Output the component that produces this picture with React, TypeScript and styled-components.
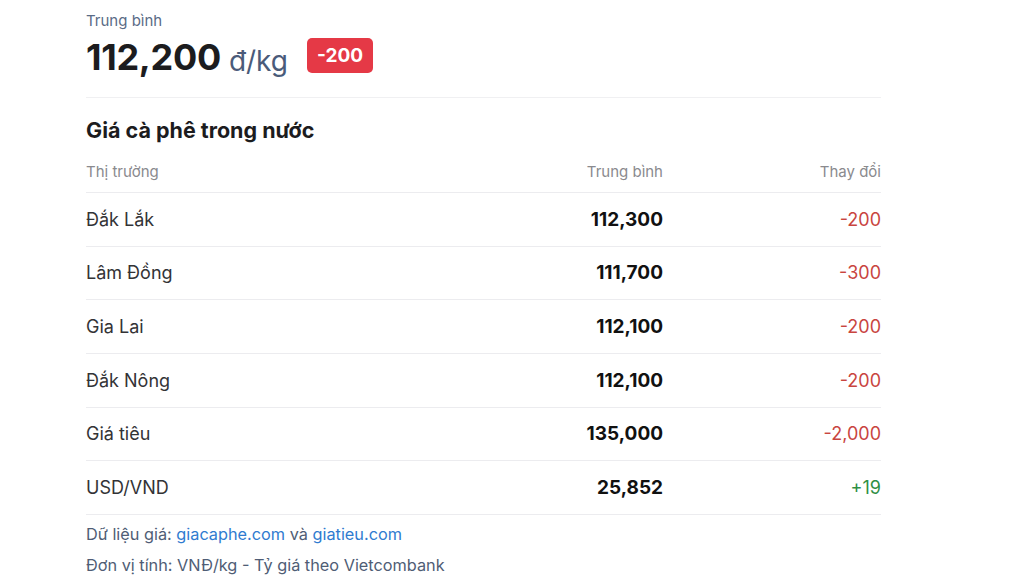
import styled, { createGlobalStyle } from "styled-components";

const GlobalStyle = createGlobalStyle`
  body {
    margin: 0;
    background: #fff;
    font-family: Inter, "Noto Sans", sans-serif;
    color: #1a1a1a;
  }
`;

interface Row {
  market: string;
  price: string;
  change: string;
}

const rows: Row[] = [
  { market: "Đắk Lắk", price: "112,300", change: "-200" },
  { market: "Lâm Đồng", price: "111,700", change: "-300" },
  { market: "Gia Lai", price: "112,100", change: "-200" },
  { market: "Đắk Nông", price: "112,100", change: "-200" },
  { market: "Giá tiêu", price: "135,000", change: "-2,000" },
  { market: "USD/VND", price: "25,852", change: "+19" },
];

export default function App() {
  return (
    <>
      <GlobalStyle />
      <Page>
        <Summary>
          <SummaryLabel>Trung bình</SummaryLabel>
          <PriceLine>
            <BigPrice>112,200</BigPrice>
            <Unit>đ/kg</Unit>
            <Badge>-200</Badge>
          </PriceLine>
        </Summary>
        <Heading>Giá cà phê trong nước</Heading>
        <Table>
          <HeadCell>Thị trường</HeadCell>
          <HeadCell $right>Trung bình</HeadCell>
          <HeadCell $right>Thay đổi</HeadCell>
          {rows.map((r) => (
            <RowGroup key={r.market}>
              <MarketCell>{r.market}</MarketCell>
              <PriceCell>{r.price}</PriceCell>
              <ChangeCell $up={r.change.startsWith("+")}>{r.change}</ChangeCell>
            </RowGroup>
          ))}
        </Table>
        <Footer>
          <FootLine>
            Dữ liệu giá: <Link>giacaphe.com</Link> và <Link>giatieu.com</Link>
          </FootLine>
          <FootLine>Đơn vị tính: VNĐ/kg - Tỷ giá theo Vietcombank</FootLine>
        </Footer>
      </Page>
    </>
  );
}

const Page = styled.div`
  width: 795px;
  margin-left: 86px;
  padding-top: 11px;
`;

const Summary = styled.div`
  padding-bottom: 17px;
  border-bottom: 1px solid #f0f0f2;
`;

const SummaryLabel = styled.div`
  font-size: 15px;
  color: #5a6b86;
  line-height: 20px;
`;

const PriceLine = styled.div`
  display: flex;
  align-items: center;
  margin-top: 3px;
`;

const BigPrice = styled.span`
  font-size: 36px;
  font-weight: 700;
  color: #1c1c1e;
  letter-spacing: -0.3px;
  line-height: 46px;
`;

const Unit = styled.span`
  font-size: 28px;
  color: #4a5b7a;
  margin-left: 8px;
  margin-top: 7px;
`;

const Badge = styled.span`
  margin-left: 19px;
  margin-top: -3px;
  background: #e53946;
  color: #fff;
  font-weight: 700;
  font-size: 19px;
  border-radius: 5px;
  padding: 6px 10px;
  line-height: 23px;
`;

const Heading = styled.h2`
  margin: 18px 0 0;
  font-size: 21.5px;
  font-weight: 700;
  color: #1c1c1e;
  line-height: 28px;
`;

const Table = styled.div`
  display: grid;
  grid-template-columns: 1fr 180px 218px;
  margin-top: 18px;
`;

const HeadCell = styled.div<{ $right?: boolean }>`
  font-size: 15px;
  color: #8a8a8e;
  text-align: ${(p) => (p.$right ? "right" : "left")};
  padding-bottom: 10px;
  border-bottom: 1px solid #ececef;
  line-height: 20px;
`;

const RowGroup = styled.div`
  display: contents;

  & > * {
    height: 52.67px;
    display: flex;
    align-items: center;
    border-bottom: 1px solid #ececef;
  }
`;

const MarketCell = styled.div`
  font-size: 18px;
  color: #333336;
`;

const PriceCell = styled.div`
  justify-content: flex-end;
  font-size: 19px;
  font-weight: 700;
  color: #111;
`;

const ChangeCell = styled.div<{ $up: boolean }>`
  justify-content: flex-end;
  font-size: 18px;
  color: ${(p) => (p.$up ? "#2f8f45" : "#c9453f")};
`;

const Footer = styled.div`
  margin-top: 4px;
`;

const FootLine = styled.div`
  font-size: 16.3px;
  color: #4f5d75;
  line-height: 31px;
`;

const Link = styled.span`
  color: #2f7bd0;
`;
